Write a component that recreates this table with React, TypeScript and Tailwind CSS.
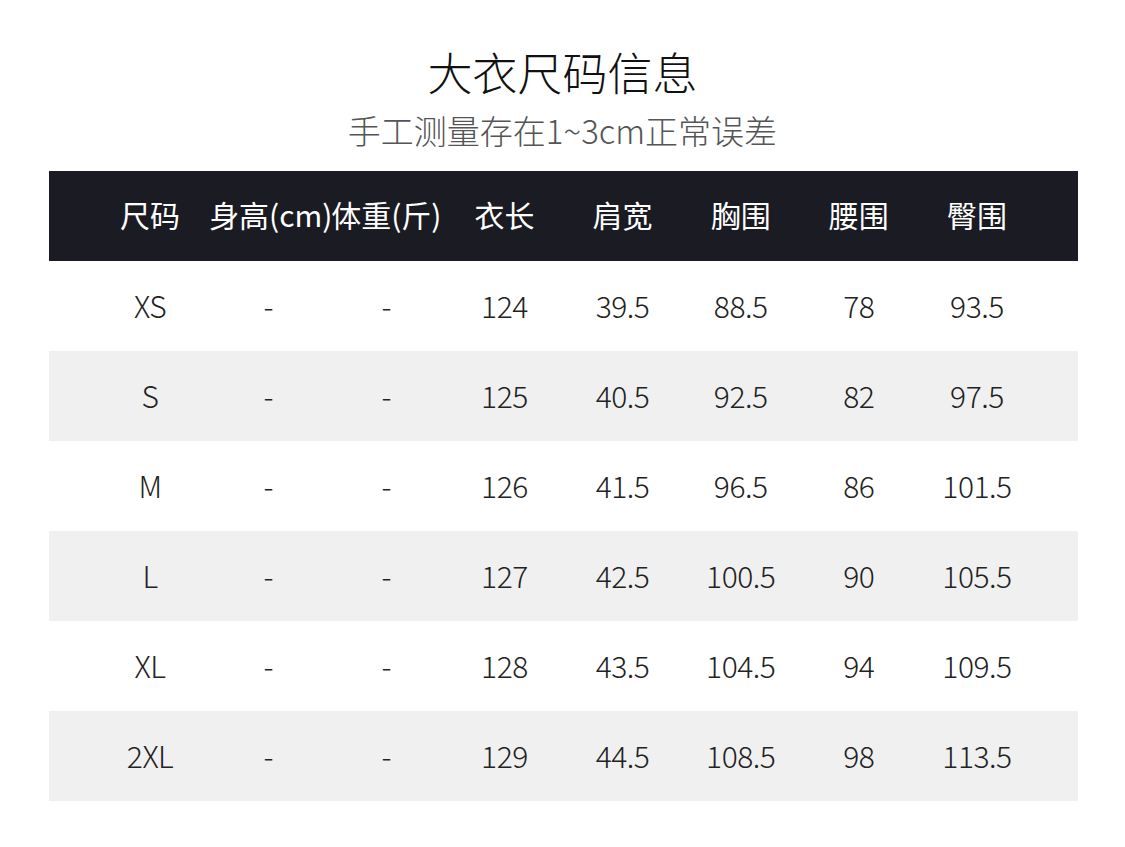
// Coat size chart: title, note, and striped measurement table.

const headers = ["尺码", "身高(cm)", "体重(斤)", "衣长", "肩宽", "胸围", "腰围", "臀围"];

const rows: string[][] = [
  ["XS", "-", "-", "124", "39.5", "88.5", "78", "93.5"],
  ["S", "-", "-", "125", "40.5", "92.5", "82", "97.5"],
  ["M", "-", "-", "126", "41.5", "96.5", "86", "101.5"],
  ["L", "-", "-", "127", "42.5", "100.5", "90", "105.5"],
  ["XL", "-", "-", "128", "43.5", "104.5", "94", "109.5"],
  ["2XL", "-", "-", "129", "44.5", "108.5", "98", "113.5"],
];

const font = "font-['Noto_Sans_CJK_SC','Noto_Sans',sans-serif]";

export default function App() {
  return (
    <div className={`min-h-[847px] w-[1125px] bg-white pt-[44px] ${font}`}>
      <h1 className="text-center text-[45px] leading-[56px] font-light text-[#111]">
        大衣尺码信息
      </h1>
      <p className="mt-[8px] text-center text-[33px] leading-[44px] font-light text-[#555]">
        手工测量存在1~3cm正常误差
      </p>

      <div className="ml-[49px] mt-[19px] w-[1029px]">
        <div className="grid h-[90px] grid-cols-8 items-center bg-[#1b1b23] px-[42px] pb-[4px] text-[30px] text-white">
          {headers.map((h) => (
            <span key={h} className="text-center whitespace-nowrap">
              {h}
            </span>
          ))}
        </div>
        {rows.map((row, i) => (
          <div
            key={row[0]}
            className={`grid h-[90px] grid-cols-8 items-center px-[42px] pb-[2px] text-[30px] font-light tracking-[-0.5px] text-[#222] ${
              i % 2 === 1 ? "bg-[#f0f0f0]" : "bg-white"
            }`}
          >
            {row.map((cell, j) => (
              <span key={j} className="text-center">
                {cell}
              </span>
            ))}
          </div>
        ))}
      </div>
    </div>
  );
}
